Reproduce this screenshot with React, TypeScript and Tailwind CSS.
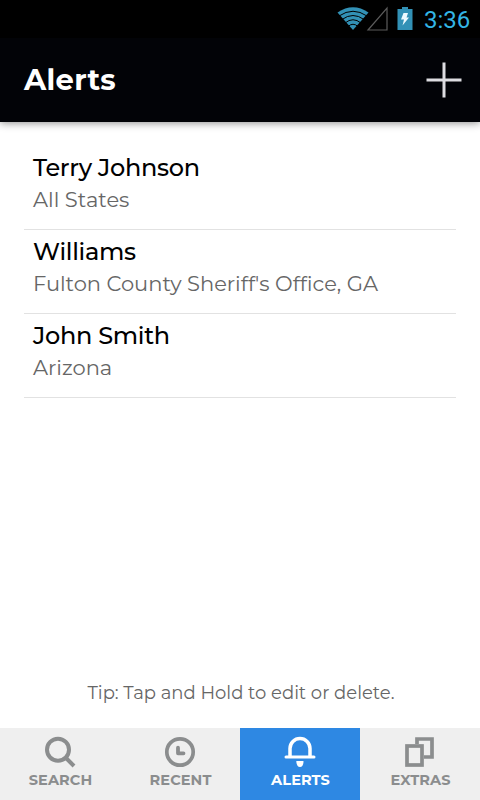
import type { ReactNode } from "react";

interface Alert {
  name: string;
  area: string;
}

const alerts: Alert[] = [
  { name: "Terry Johnson", area: "All States" },
  { name: "Williams", area: "Fulton County Sheriff's Office, GA" },
  { name: "John Smith", area: "Arizona" },
];

function StatusBar() {
  return (
    <div className="flex h-[38px] justify-end bg-black">
      <svg width="84" height="38" viewBox="337 0 84 38" fill="none">
        <path d="M337.5 12.5Q353 2 368.500 12.500L353 30Z" fill="#3291b6" />
        <g stroke="#000" strokeWidth="1">
          <path d="M339 16Q353 6.500 367 16" />
          <path d="M342 19.500Q353 11.500 364 19.500" />
          <path d="M345 23Q353 16.500 361 23" />
          <path d="M348 26.500Q353 22 358 26.500" />
        </g>
        <path d="M387 8V30H368Z" stroke="#5c5c5c" strokeWidth="1.200" />
        <path d="M402 7h6v2h4.500v21h-15V9h4.500Z" fill="#3291b6" />
        <path d="M403.500 13h4.500l-1.500 4.500h2.500l-6.500 8 1.500-6h-3Z" fill="#eefaff" />
      </svg>
      <span className="mr-[9px] ml-[3px] w-[47px] pt-[2px] font-['Roboto',sans-serif] text-[24px] leading-[36px] text-[#33b5e5]">
        3:36
      </span>
    </div>
  );
}

function Header() {
  return (
    <header className="flex h-[84px] items-center justify-between bg-[#020307] pr-[18px] pl-6 shadow-[0_1px_8px_rgba(0,0,0,0.45)]">
      <h1 className="text-[29px] leading-[36px] font-bold tracking-[0.3px] text-white">Alerts</h1>
      <svg width="36" height="36" viewBox="0 0 36 36" stroke="#dddde1" strokeWidth="3">
        <path d="M18 0.500V35.500M0.500 18H35.500" />
      </svg>
    </header>
  );
}

function Tab({ label, active, children }: { label: string; active?: boolean; children: ReactNode }) {
  return (
    <div className={`flex flex-1 flex-col items-center pt-2 ${active ? "bg-[#2e88e3] text-white" : "bg-[#efefef] text-[#8b8d8e]"}`}>
      <svg width="32" height="32" viewBox="0 0 32 32" fill="none" stroke="currentColor" strokeWidth="4">
        {children}
      </svg>
      <span className="mt-[4px] pl-px text-[14.5px] leading-[17px] font-bold tracking-[0.1px]">{label}</span>
    </div>
  );
}

export default function App() {
  return (
    <div className="flex h-[800px] w-[480px] flex-col overflow-hidden bg-white font-['Montserrat','Inter',sans-serif]">
      <StatusBar />
      <Header />
      <main className="flex flex-1 flex-col px-6 pt-6">
        <ul>
          {alerts.map((a) => (
            <li key={a.name} className="h-[84px] border-b border-[#e2e2e2] pt-[7px] pl-[9px]">
              <p className="text-[24px] leading-[30px] font-medium tracking-[-0.3px] whitespace-nowrap text-black">{a.name}</p>
              <p className="mt-[4px] text-[21px] leading-[26px] font-normal whitespace-nowrap text-[#666]">{a.area}</p>
            </li>
          ))}
        </ul>
        <p className="mt-auto mb-[23px] pl-[2px] text-center text-[18px] leading-[24px] whitespace-nowrap text-[#666]">
          Tip: Tap and Hold to edit or delete.
        </p>
      </main>
      <nav className="flex h-[72px]">
        <Tab label="SEARCH">
          <circle cx="14" cy="13.700" r="11" />
          <path d="M21.500 21.500L30 30" />
        </Tab>
        <Tab label="RECENT">
          <circle cx="16" cy="16" r="13.200" strokeWidth="3.700" />
          <path d="M14 11.700V17.300H19.500" strokeLinejoin="round" strokeLinecap="round" strokeWidth="3.800" />
        </Tab>
        <Tab label="ALERTS" active>
          <path d="M2 21H30" strokeWidth="3" strokeLinecap="round" />
          <path d="M6 21V12.500A10 10 0 0 1 26 12.500V21" strokeWidth="3.500" />
          <path d="M12.300 25H19.500Q19.500 31 16 31T12.300 25Z" fill="currentColor" stroke="none" />
        </Tab>
        <Tab label="EXTRAS">
          <path d="M13 8V3H28V21H20" strokeWidth="3.700" />
          <rect x="3" y="10" width="15" height="19" strokeWidth="3.700" />
        </Tab>
      </nav>
    </div>
  );
}
